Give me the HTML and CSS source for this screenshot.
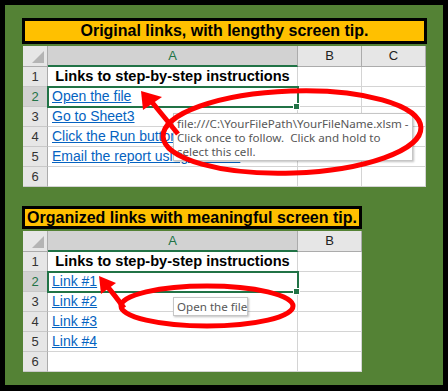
FILE: index.html
```html
<html>
<head>
<meta charset="utf-8">
<meta name="viewport" content="width=device-width, initial-scale=1">
<link rel="stylesheet" href="styles.css">
</head>
<body>
	<div class="frame">
		<div class="title wide">Original links, with lengthy screen tip.</div>
		<div class="sheet three">
			<div class="corner"></div>
			<div class="colhead sel">A</div>
			<div class="colhead">B</div>
			<div class="colhead">C</div>

			<div class="rowhead">1</div>
			<div class="cell heading">Links to step-by-step instructions</div>
			<div class="cell"></div>
			<div class="cell"></div>

			<div class="rowhead sel">2</div>
			<div class="cell active"><a>Open the file</a><span class="handle"></span></div>
			<div class="cell"></div>
			<div class="cell"></div>

			<div class="rowhead">3</div>
			<div class="cell"><a>Go to Sheet3</a></div>
			<div class="cell"></div>
			<div class="cell"></div>

			<div class="rowhead">4</div>
			<div class="cell"><a>Click the Run button</a></div>
			<div class="cell"></div>
			<div class="cell"></div>

			<div class="rowhead">5</div>
			<div class="cell"><a>Email the report using Outlook</a></div>
			<div class="cell"></div>
			<div class="cell"></div>

			<div class="rowhead">6</div>
			<div class="cell"></div>
			<div class="cell"></div>
			<div class="cell"></div>
		</div>

		<div class="title narrow">Organized links with meaningful screen tip.</div>
		<div class="sheet two">
			<div class="corner"></div>
			<div class="colhead sel">A</div>
			<div class="colhead">B</div>

			<div class="rowhead">1</div>
			<div class="cell heading">Links to step-by-step instructions</div>
			<div class="cell"></div>

			<div class="rowhead sel">2</div>
			<div class="cell active"><a>Link #1</a><span class="handle"></span></div>
			<div class="cell"></div>

			<div class="rowhead">3</div>
			<div class="cell"><a>Link #2</a></div>
			<div class="cell"></div>

			<div class="rowhead">4</div>
			<div class="cell"><a>Link #3</a></div>
			<div class="cell"></div>

			<div class="rowhead">5</div>
			<div class="cell"><a>Link #4</a></div>
			<div class="cell"></div>

			<div class="rowhead">6</div>
			<div class="cell"></div>
			<div class="cell"></div>
		</div>
	</div>

	<div class="tip tip-long">file:///C:\YourFilePath\YourFileName.xlsm -<br>Click once to follow.&nbsp; Click and hold to<br>select this cell.</div>
	<div class="tip tip-short">Open the file</div>

	<svg class="marks" viewBox="0 0 448 391">
		<g fill="none" stroke="#ff0000" stroke-width="5">
			<ellipse cx="292" cy="132" rx="129" ry="41" transform="rotate(-2 292 132)"/>
			<path d="M178,134 C170,124 160,112 151,101"/>
			<ellipse cx="207" cy="306" rx="86" ry="20"/>
			<path d="M124,308 C119,301 113,293 106,285"/>
		</g>
		<g fill="#ff0000">
			<polygon points="141,91 162,97 143,110"/>
			<polygon points="99,276 116,283 101,294"/>
		</g>
	</svg>
</body>
</html>
```

FILE: styles.css
```css
body {
	margin: 0;
	font-family: "Liberation Sans", Arial, sans-serif;
	position: relative;
	width: 448px;
	height: 391px;
	overflow: hidden;
}

.frame {
	box-sizing: border-box;
	width: 448px;
	height: 391px;
	background: #548235;
	border: solid #000 5px;
	border-bottom-width: 6px;
	padding: 13px 16px 0 17px;
}

.title {
	box-sizing: border-box;
	background: #ffc000;
	border: solid #000 3px;
	font-weight: bold;
	color: #000;
	text-align: center;
	white-space: nowrap;
}

.title.wide {
	width: 405px;
	height: 26px;
	font-size: 16px;
	line-height: 20px;
}

.title.narrow {
	width: 340px;
	height: 23px;
	font-size: 16px;
	line-height: 17px;
	margin-top: 19px;
}

.sheet {
	display: grid;
	margin: 2px 0 0 1px;
	background: #fff;
	width: fit-content;
}

.sheet.three {
	grid-template-columns: 25px 250px 64px 64px;
}

.sheet.two {
	grid-template-columns: 25px 250px 64px;
}

.sheet > div {
	box-sizing: border-box;
	height: 20px;
	border-right: solid #d4d4d4 1px;
	border-bottom: solid #d4d4d4 1px;
}

.corner, .colhead {
	height: 21px !important;
	background: #e6e6e6;
}

.corner {
	position: relative;
	border-right-color: #ababab !important;
	border-bottom-color: #ababab !important;
}

.corner::after {
	content: "";
	position: absolute;
	right: 3px;
	bottom: 3px;
	border-style: solid;
	border-width: 0 0 12px 12px;
	border-color: transparent transparent #b4b4b4 transparent;
}

.colhead {
	font-size: 13px;
	line-height: 20px;
	text-align: center;
	color: #222;
	border-right-color: #ababab !important;
	border-bottom-color: #ababab !important;
}

.colhead.sel {
	background: #d2d2d2;
	color: #217346;
	border-bottom: solid #217346 2px !important;
}

.rowhead {
	background: #e6e6e6;
	font-size: 13px;
	line-height: 20px;
	text-align: center;
	color: #333;
	border-right-color: #ababab !important;
	border-bottom-color: #c8c8c8 !important;
}

.rowhead.sel {
	background: #d2d2d2;
	color: #217346;
}

.cell {
	font-size: 14px;
	line-height: 19px;
	padding: 0 4px;
	white-space: nowrap;
	overflow: hidden;
}

.cell.heading {
	font-weight: bold;
	font-size: 14.6px;
	text-align: center;
	padding: 0;
}

.cell a {
	color: #0563c1;
	text-decoration: underline;
}

.cell.active {
	position: relative;
	overflow: visible;
	outline: solid #217346 2px;
	outline-offset: -1px;
	z-index: 1;
}

.handle {
	position: absolute;
	right: -3px;
	bottom: -4px;
	width: 5px;
	height: 5px;
	background: #217346;
	border: solid #fff 1px;
}

.tip {
	position: absolute;
	box-sizing: border-box;
	background: #fff;
	border: solid #c6c6c6 1px;
	box-shadow: 1px 1px 2px rgba(0,0,0,0.25);
	color: #575757;
	font-family: "Noto Sans", "DejaVu Sans", sans-serif;
	font-size: 11.6px;
	white-space: nowrap;
	z-index: 2;
}

.tip-long {
	left: 173px;
	top: 113px;
	width: 240px;
	height: 48px;
	padding: 3px 3px;
	line-height: 14px;
}

.tip-short {
	left: 173px;
	top: 297px;
	width: 75px;
	height: 19px;
	padding: 0 3px;
	line-height: 17px;
}

.marks {
	position: absolute;
	left: 0;
	top: 0;
	width: 448px;
	height: 391px;
	z-index: 3;
}
```
